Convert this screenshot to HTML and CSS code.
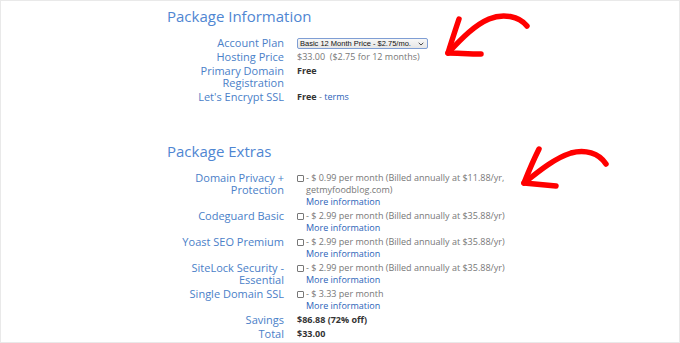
FILE: index.html
```html
<!DOCTYPE html>
<html lang="en">
<head>
<meta charset="utf-8">
<title>Package Information</title>
<link rel="stylesheet" href="styles.css">
</head>
<body>
<div class="frame">
  <section class="pkg">
    <h2 class="pkg-title">Package Information</h2>
    <div class="rows">
      <div class="label">Account Plan</div>
      <div class="value">
        <div class="select"><span>Basic 12 Month Price - $2.75/mo.</span><svg class="chev" viewBox="0 0 6 4" width="6" height="4"><path d="M0.7 0.8 L3 3 L5.3 0.8" fill="none" stroke="#333" stroke-width="0.9"/></svg></div>
      </div>
      <div class="label">Hosting Price</div>
      <div class="value muted">$33.00&nbsp; ($2.75 for 12 months)</div>
      <div class="label">Primary Domain Registration</div>
      <div class="value strong">Free</div>
      <div class="label">Let's Encrypt SSL</div>
      <div class="value"><span class="strong">Free</span> <span class="muted">-</span> <a class="link">terms</a></div>
    </div>
  </section>

  <section class="pkg extras">
    <h2 class="pkg-title">Package Extras</h2>
    <div class="rows">
      <div class="label">Domain Privacy + Protection</div>
      <div class="value opt"><span class="box"></span><div class="opt-text"><span class="muted">- $ 0.99 per month (Billed annually at $11.88/yr, getmyfoodblog.com)</span><a class="link">More information</a></div></div>
      <div class="label">Codeguard Basic</div>
      <div class="value opt"><span class="box"></span><div class="opt-text"><span class="muted">- $ 2.99 per month (Billed annually at $35.88/yr)</span><a class="link">More information</a></div></div>
      <div class="label">Yoast SEO Premium</div>
      <div class="value opt"><span class="box"></span><div class="opt-text"><span class="muted">- $ 2.99 per month (Billed annually at $35.88/yr)</span><a class="link">More information</a></div></div>
      <div class="label">SiteLock Security - Essential</div>
      <div class="value opt"><span class="box"></span><div class="opt-text"><span class="muted">- $ 2.99 per month (Billed annually at $35.88/yr)</span><a class="link">More information</a></div></div>
      <div class="label">Single Domain SSL</div>
      <div class="value opt"><span class="box"></span><div class="opt-text"><span class="muted">- $ 3.33 per month</span><a class="link">More information</a></div></div>
      <div class="label">Savings</div>
      <div class="value strong">$86.88 (72% off)</div>
      <div class="label">Total</div>
      <div class="value strong">$33.00</div>
    </div>
  </section>

  <svg class="arrow arrow-1" width="100" height="60" viewBox="0 0 100 60">
    <path d="M86 15 C78 5 62 2 48 8 C34 14 22 26 7 42" fill="none" stroke="#f00" stroke-width="5.5" stroke-linecap="round"/>
    <path d="M18 8 C14 20 10 32 7 42 C16 42 28 43 40 43" fill="none" stroke="#f00" stroke-width="5.5" stroke-linecap="round" stroke-linejoin="round"/>
  </svg>
  <svg class="arrow arrow-2" width="110" height="60" viewBox="0 0 110 60">
    <path d="M95 23 C88 12 74 8 60 12 C44 17 28 30 13 42" fill="none" stroke="#f00" stroke-width="5.5" stroke-linecap="round"/>
    <path d="M28 8 C22 20 17 32 13 42 C24 43 35 44 45 45" fill="none" stroke="#f00" stroke-width="5.5" stroke-linecap="round" stroke-linejoin="round"/>
  </svg>
</div>
</body>
</html>
```

FILE: styles.css
```css
html, body {
  margin: 0;
  padding: 0;
  background: #fff;
}

.frame {
  position: relative;
  box-sizing: border-box;
  width: 680px;
  height: 343px;
  border: 1px solid #e9e9e9;
  padding: 5px 0 0 0;
  font-family: "Open Sans", "Noto Sans", sans-serif;
  overflow: hidden;
}

.pkg {
  margin-left: 165px;
}

.extras {
  margin-top: 38px;
}

.pkg-title {
  margin: 0 0 11px 1px;
  font-weight: 400;
  font-size: 15px;
  line-height: 20px;
  color: #4f86d2;
}

.rows {
  display: grid;
  grid-template-columns: 118px 210px;
  column-gap: 13px;
  row-gap: 2px;
  align-items: start;
}

.label {
  text-align: right;
  font-size: 11px;
  line-height: 12px;
  color: #4a80c8;
}

.value {
  font-size: 9px;
  line-height: 12px;
  color: #666;
}

.muted {
  color: #777;
}

.strong {
  font-weight: 700;
  color: #333;
}

.link {
  color: #2a62b8;
  text-decoration: none;
}

.select {
  display: flex;
  align-items: center;
  justify-content: space-between;
  box-sizing: border-box;
  width: 131px;
  height: 11px;
  margin-top: 1px;
  padding: 0 3px 0 2px;
  border: 1px solid #7f9ed4;
  border-radius: 2px;
  background: linear-gradient(#f7f7f7, #e6e6e6);
  font-family: "Liberation Sans", Arial, sans-serif;
  font-size: 7.5px;
  line-height: 9px;
  color: #111;
  white-space: nowrap;
}

.opt {
  display: flex;
  align-items: flex-start;
  gap: 2px;
}

.box {
  flex: none;
  box-sizing: border-box;
  width: 7px;
  height: 7px;
  margin-top: 3px;
  border: 1px solid #777;
  border-radius: 1px;
  background: #fff;
}

.opt-text {
  display: flex;
  flex-direction: column;
  align-items: flex-start;
}

.arrow {
  position: absolute;
  pointer-events: none;
}

.arrow-1 {
  left: 440px;
  top: 10px;
}

.arrow-2 {
  left: 510px;
  top: 140px;
}
```
